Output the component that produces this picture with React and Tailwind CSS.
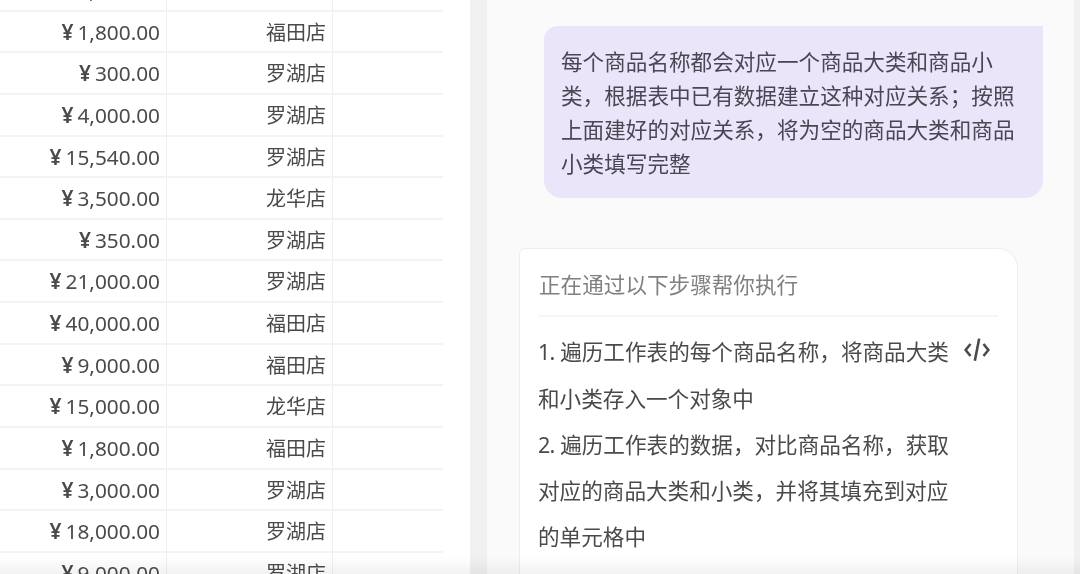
import React from 'react';

const rows = [
  ['5,000.00', '罗湖店'],
  ['1,800.00', '福田店'],
  ['300.00', '罗湖店'],
  ['4,000.00', '罗湖店'],
  ['15,540.00', '罗湖店'],
  ['3,500.00', '龙华店'],
  ['350.00', '罗湖店'],
  ['21,000.00', '罗湖店'],
  ['40,000.00', '福田店'],
  ['9,000.00', '福田店'],
  ['15,000.00', '龙华店'],
  ['1,800.00', '福田店'],
  ['3,000.00', '罗湖店'],
  ['18,000.00', '罗湖店'],
  ['9,000.00', '罗湖店'],
];

const steps = [
  ['1.', ' 遍历工作表的每个商品名称，将商品大类'],
  ['', '和小类存入一个对象中'],
  ['2.', ' 遍历工作表的数据，对比商品名称，获取'],
  ['', '对应的商品大类和小类，并将其填充到对应'],
  ['', '的单元格中'],
];

export default function App() {
  return (
    <div className="h-[574px] w-[1080px] overflow-hidden bg-white">
      <div className="relative flex h-[574px] w-[1080px] blur-[0.5px] bg-white font-['Noto_Sans','Noto_Sans_CJK_SC',sans-serif] text-[#4a4a4a]">
        {/* Sheet */}
        <div className="w-[470px] shrink-0 bg-white">
          <div className="-mt-[30px] w-[443px]">
            {rows.map((r, i) => (
              <div key={i} className="flex h-[41.65px] border-b-2 border-[#f3f3f3] leading-[41px]">
                <div className="w-[167px] border-r border-[#efefef] pr-[6px] text-right text-[20.8px]">
                  <span className="mr-[4px] text-[21px] font-semibold">¥</span>{r[0]}
                </div>
                <div className="w-[166px] border-r border-[#efefef] pr-[6px] text-right text-[20px]">{r[1]}</div>
              </div>
            ))}
          </div>
        </div>
        <div className="w-[17px] shrink-0 bg-[#f0f0f0]" />

        {/* Assistant panel */}
        <div className="flex-1 bg-[#fbfafb]">
          <div className="ml-[57px] mt-[26px] w-[499px] rounded-b-[18px] rounded-tl-[14px] bg-[#eae5f8] pl-[17px] pt-[19px] pb-[17px] text-[21.6px] leading-[34.1px] text-[#4a4754]">
            <p>每个商品名称都会对应一个商品大类和商品小</p>
            <p>类，根据表中已有数据建立这种对应关系；按照</p>
            <p>上面建好的对应关系，将为空的商品大类和商品</p>
            <p>小类填写完整</p>
          </div>

          <div className="ml-[32px] mt-[50px] w-[499px] rounded-tl-[6px] rounded-tr-[20px] border border-[#eeeeee] bg-white px-[19px] pb-[40px] text-[21.6px]">
            <div className="border-b-2 border-[#f5f5f5] pt-[20px] pb-[14px] leading-[32px] text-[#808080]">正在通过以下步骤帮你执行</div>
            <div className="pt-[12px]">
              {steps.map((s, i) => (
                <div key={i} className="relative h-[46.2px] -ml-[1px] leading-[46.2px] whitespace-nowrap">
                  {s[0] && <span className="tracking-[-0.8px]">{s[0]}</span>}
                  {s[1]}
                  {i === 0 && (
                    <svg viewBox="0 0 24 24" className="absolute left-[426px] top-[8px] h-[26px] w-[26px]" fill="none" stroke="#4a4a4a" strokeWidth="2.4">
                      <path d="M6 6.5 1.5 12 6 17.5" />
                      <path d="M18 6.5 22.5 12 18 17.5" />
                      <path d="M14 1.5 10 22" />
                    </svg>
                  )}
                </div>
              ))}
            </div>
          </div>
        </div>
        <div className="w-[6px] shrink-0 bg-[#f1f1f1]" />

        {/* bottom fade of the video frame */}
        <div className="pointer-events-none absolute inset-x-0 bottom-0 h-[18px] bg-gradient-to-b from-transparent to-black/5" />
      </div>
    </div>
  );
}
